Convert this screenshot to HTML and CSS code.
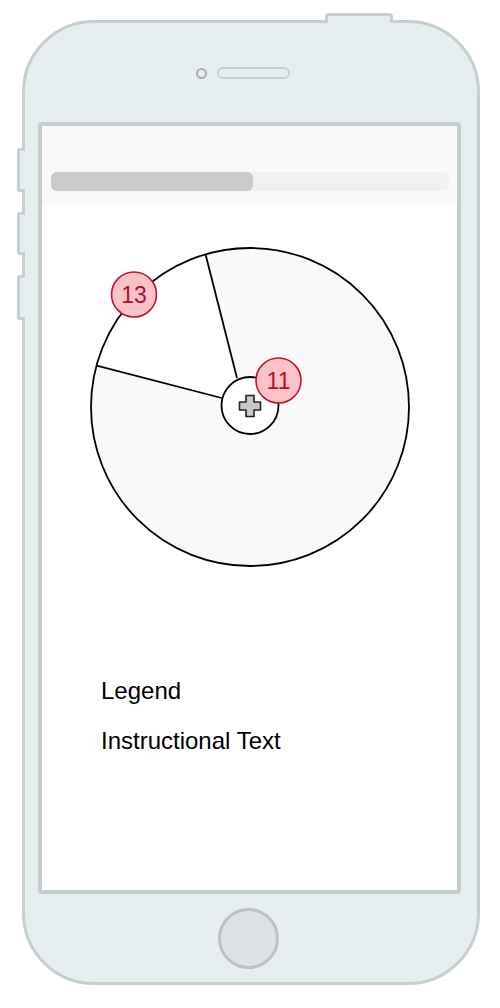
FILE: index.html
```html
<!DOCTYPE html>
<html>
<head lang="en">
    <meta charset="UTF-8">
    <title>Pie</title>
    <link rel="stylesheet" href="styles.css">
</head>
<body>
    <div class="phone">
        <span class="btn-top"></span>
        <span class="btn-side btn-mute"></span>
        <span class="btn-side btn-vol-up"></span>
        <span class="btn-side btn-vol-down"></span>

        <div class="sensors">
            <span class="camera"></span>
            <span class="speaker"></span>
        </div>

        <div class="screen">
            <div class="header">
                <div class="progress">
                    <div class="progress-fill" style="width: 50.8%"></div>
                </div>
            </div>

            <svg class="chart" width="415" height="380" viewBox="42 205 415 380">
                <circle cx="250" cy="407" r="159" fill="#f9f9f9"/>
                <path d="M237 378 L205.7 255 A159 159 0 0 0 96.7 365.7 L221.7 398 Z" fill="#fff"/>
                <circle cx="250" cy="407" r="159" fill="none" stroke="#000" stroke-width="1.8"/>
                <line x1="237" y1="378" x2="205.7" y2="255" stroke="#000" stroke-width="1.8"/>
                <line x1="221.7" y1="398" x2="96.7" y2="365.7" stroke="#000" stroke-width="1.8"/>
                <circle cx="250" cy="405.5" r="28.5" fill="#fff" stroke="#000" stroke-width="1.8"/>
                <path d="M246 395.5 H254 V402 H260.5 V410 H254 V416.5 H246 V410 H239.5 V402 H246 Z"
                      fill="#c9c9c9" stroke="#222" stroke-width="1.6" stroke-linejoin="round"/>

                <circle cx="134" cy="294.5" r="22.5" fill="#fbc3c8" stroke="#c4122e" stroke-width="1.6"/>
                <text class="badge-text" x="134" y="302.8" text-anchor="middle">13</text>
                <circle cx="278.5" cy="380.5" r="22.5" fill="#fbc3c8" stroke="#c4122e" stroke-width="1.6"/>
                <text class="badge-text" x="278.5" y="388.8" text-anchor="middle">11</text>
            </svg>

            <div class="legend">
                <p>Legend</p>
                <p>Instructional Text</p>
            </div>
        </div>

        <div class="home"></div>
    </div>
</body>
</html>
```

FILE: styles.css
```css
*{
    margin: 0;
    padding: 0;
}
html, body{
    background: #fff;
    overflow: hidden;
}
body{
    font-family: "Liberation Sans", Arial, Helvetica, sans-serif;
}
.phone{
    position: relative;
    box-sizing: border-box;
    width: 458px;
    height: 965px;
    margin: 20px 0 0 22px;
    background: #e6eef0;
    border: 3px solid #c6cfcf;
    border-radius: 72px;
    display: flex;
    flex-direction: column;
    align-items: flex-start;
}
.btn-top{
    position: absolute;
    top: -10px;
    left: 300px;
    box-sizing: border-box;
    width: 68px;
    height: 10px;
    background: #e6eef0;
    border: 3px solid #c6cfcf;
    border-bottom: none;
    border-radius: 4px 4px 0 0;
}
.btn-side{
    position: absolute;
    left: -8px;
    box-sizing: border-box;
    width: 8px;
    background: #e6eef0;
    border: 3px solid #c6cfcf;
    border-right: none;
    border-radius: 3px 0 0 3px;
}
.btn-mute{
    top: 125px;
    height: 44px;
}
.btn-vol-up{
    top: 189px;
    height: 43px;
}
.btn-vol-down{
    top: 252px;
    height: 45px;
}
.sensors{
    display: flex;
    align-items: center;
    gap: 10px;
    margin: 44px 0 0 171px;
}
.camera{
    box-sizing: border-box;
    width: 11px;
    height: 11px;
    border: 2.5px solid #a9aeb0;
    border-radius: 50%;
    background: #e6eef0;
}
.speaker{
    box-sizing: border-box;
    width: 73px;
    height: 12px;
    border: 2.5px solid #c6cfcf;
    border-radius: 6px;
    background: #e6eef0;
}
.screen{
    box-sizing: border-box;
    width: 423px;
    height: 772px;
    margin: 43px 0 0 13px;
    background: #fff;
    border: 4px solid #c4cdcd;
    border-radius: 4px;
    display: flex;
    flex-direction: column;
}
.header{
    background: #f9f9f9;
    padding: 46px 8px 14px 9px;
}
.progress{
    height: 19px;
    background: #f0f0f0;
    border-radius: 6px;
}
.progress-fill{
    height: 100%;
    background: #cacaca;
    border-radius: 6px;
}
.chart{
    display: block;
}
.badge-text{
    font-family: "Liberation Sans", Arial, Helvetica, sans-serif;
    font-size: 23px;
    fill: #b0102a;
}
.legend{
    margin-top: 92px;
    padding-left: 59px;
    display: flex;
    flex-direction: column;
    gap: 22px;
}
.legend p{
    font-size: 24px;
    line-height: 28px;
    color: #000;
}
.home{
    box-sizing: border-box;
    width: 61px;
    height: 61px;
    margin: 14px 0 0 193px;
    background: #dde2e4;
    border: 3px solid #bcc1c3;
    border-radius: 50%;
}
```
